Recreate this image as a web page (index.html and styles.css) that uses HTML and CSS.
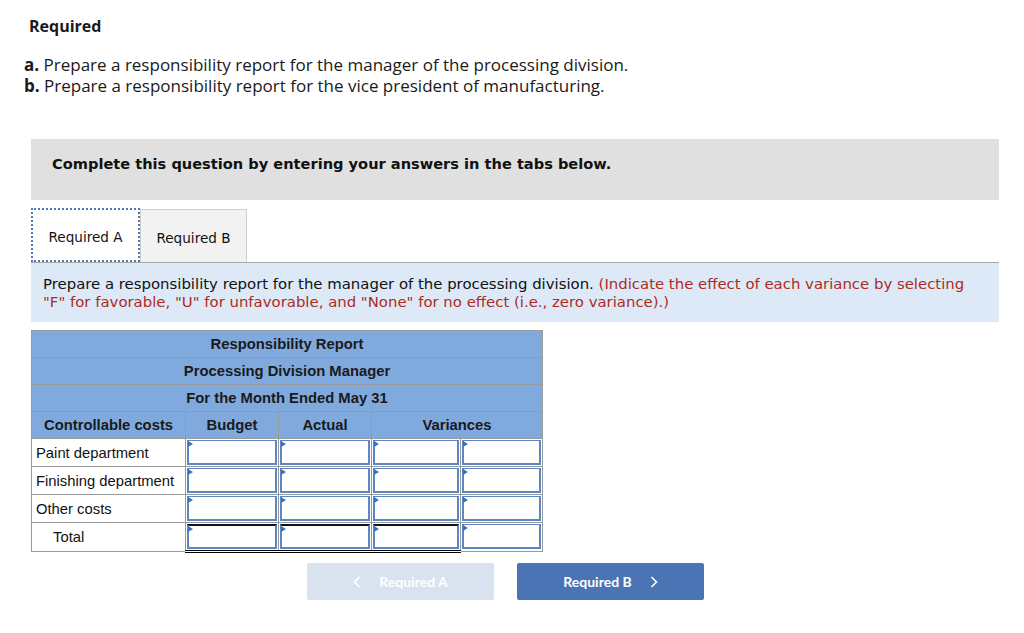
FILE: index.html
```html
<!DOCTYPE html>
<html>
<head>
<meta charset="utf-8">
<link rel="stylesheet" href="styles.css">
</head>
<body>
<div class="page">
  <h2 class="req-title">Required</h2>
  <ol class="req-list">
    <li><b>a.</b> Prepare a responsibility report for the manager of the processing division.</li>
    <li><b>b.</b> Prepare a responsibility report for the vice president of manufacturing.</li>
  </ol>

  <div class="notice">Complete this question by entering your answers in the tabs below.</div>

  <div class="tabs">
    <div class="tab active">Required A</div>
    <div class="tab">Required B</div>
  </div>

  <div class="instr">Prepare a responsibility report for the manager of the processing division. <span class="red">(Indicate the effect of each variance by selecting "F" for favorable, "U" for unfavorable, and "None" for no effect (i.e., zero variance).)</span></div>

  <table class="report">
    <colgroup>
      <col class="c1"><col class="c2"><col class="c3"><col class="c4"><col class="c5">
    </colgroup>
    <tr class="hd"><th colspan="5">Responsibility Report</th></tr>
    <tr class="hd"><th colspan="5">Processing Division Manager</th></tr>
    <tr class="hd"><th colspan="5">For the Month Ended May 31</th></tr>
    <tr class="hd"><th>Controllable costs</th><th>Budget</th><th>Actual</th><th colspan="2">Variances</th></tr>
    <tr>
      <td class="lbl">Paint department</td>
      <td class="in"><div class="box"></div></td>
      <td class="in"><div class="box"></div></td>
      <td class="in"><div class="box"></div></td>
      <td class="in"><div class="box"></div></td>
    </tr>
    <tr>
      <td class="lbl">Finishing department</td>
      <td class="in"><div class="box"></div></td>
      <td class="in"><div class="box"></div></td>
      <td class="in"><div class="box"></div></td>
      <td class="in"><div class="box"></div></td>
    </tr>
    <tr>
      <td class="lbl">Other costs</td>
      <td class="in"><div class="box"></div></td>
      <td class="in"><div class="box"></div></td>
      <td class="in"><div class="box"></div></td>
      <td class="in"><div class="box"></div></td>
    </tr>
    <tr class="total">
      <td class="lbl indent">Total</td>
      <td class="in sum"><div class="box"></div></td>
      <td class="in sum"><div class="box"></div></td>
      <td class="in sum"><div class="box"></div></td>
      <td class="in"><div class="box"></div></td>
    </tr>
  </table>

  <div class="nav">
    <div class="btn disabled"><svg class="chev" width="8" height="12" viewBox="0 0 8 12"><polyline points="6.5,1 1.5,6 6.5,11" fill="none" stroke="#fff" stroke-width="1.6"/></svg>Required A</div>
    <div class="btn primary">Required B<svg class="chev right" width="8" height="12" viewBox="0 0 8 12"><polyline points="1.5,1 6.5,6 1.5,11" fill="none" stroke="#fff" stroke-width="1.6"/></svg></div>
  </div>
</div>
</body>
</html>
```

FILE: styles.css
```css
* { box-sizing: border-box; }
body {
  margin: 0;
  background: #fff;
  color: #1a1a1a;
  font-family: "Open Sans", "Lato", sans-serif;
}
.page {
  padding: 16px 25px 0 31px;
}
.req-title {
  margin: 0 0 0 -2px;
  font-size: 16px;
  line-height: 20px;
  font-weight: 700;
}
.req-list {
  list-style: none;
  margin: 18px 0 0 -7px;
  padding: 0;
  font-size: 17px;
  line-height: 21px;
}
.req-list b { font-weight: 700; }

.notice {
  margin-top: 43px;
  height: 61px;
  background: #e0e0e0;
  font-family: "DejaVu Sans", Verdana, sans-serif;
  font-weight: 700;
  font-size: 14.6px;
  line-height: 18px;
  padding: 16px 0 0 21px;
  color: #111;
}

.tabs {
  display: flex;
  margin-top: 8px;
  height: 54px;
  align-items: flex-end;
}
.tab {
  font-family: "DejaVu Sans", Verdana, sans-serif;
  font-size: 13.6px;
  height: 53px;
  display: flex;
  align-items: center;
  justify-content: center;
  padding-top: 3px;
  color: #111;
}
.tab.active {
  width: 109px;
  height: 54px;
  background: #fff;
  border: 2px dotted #4f77b8;
}
.tab:not(.active) {
  width: 107px;
  background: #f2f2f2;
  border: 1px solid #cfcfcf;
  border-bottom: none;
}

.instr {
  background: #dde9f7;
  border-top: 1px solid #aaa;
  font-family: "DejaVu Sans", Verdana, sans-serif;
  font-size: 14.9px;
  line-height: 18px;
  padding: 12px 12px 10px 12px;
  color: #111;
  height: 60px;
}
.instr .red { color: #ad2b22; }

.report {
  margin-top: 8px;
  border-collapse: collapse;
  width: 511px;
  font-family: "Liberation Sans", Arial, sans-serif;
  font-size: 14.8px;
  table-layout: fixed;
}
.c1 { width: 154px; }
.c2 { width: 93px; }
.c3 { width: 93px; }
.c4 { width: 89px; }
.c5 { width: 82px; }
.report th {
  background: #80a9de;
  border: 1px solid #999;
  height: 27px;
  padding: 0;
  font-weight: 700;
  color: #1a1a1a;
}
.report td {
  border: 1px solid #999;
  height: 28px;
  padding: 0;
}
.report td.lbl {
  padding-left: 4px;
  background: #fff;
  color: #111;
  white-space: nowrap;
}
.report td.indent { padding-left: 21px; }
.report td.in {
  padding: 1px;
  vertical-align: top;
}
.box {
  position: relative;
  height: 25px;
  border: 2px solid #5d86c2;
  border-top-width: 1px;
  border-left-width: 2px;
  background: #fff;
}
.box::before {
  content: "";
  position: absolute;
  left: -1px;
  top: 0;
  border-left: 5px solid #3d6fbf;
  border-top: 3px solid transparent;
  border-bottom: 3px solid transparent;
}
.total td.sum { border-bottom: 3px double #000; }
.total td.sum .box { border-top: 2px solid #111; }

.nav {
  display: flex;
  gap: 23px;
  margin: 10px 0 0 276px;
}
.btn {
  width: 187px;
  height: 37px;
  border-radius: 2px;
  display: flex;
  align-items: center;
  justify-content: center;
  font-family: "Lato", "Open Sans", sans-serif;
  font-weight: 700;
  font-size: 14px;
  color: #fff;
}
.btn.disabled { background: #d9e3f0; }
.btn.primary { background: #4a74b4; }
.chev { margin-right: 18px; }
.chev.right { margin-right: 0; margin-left: 18px; }
```
